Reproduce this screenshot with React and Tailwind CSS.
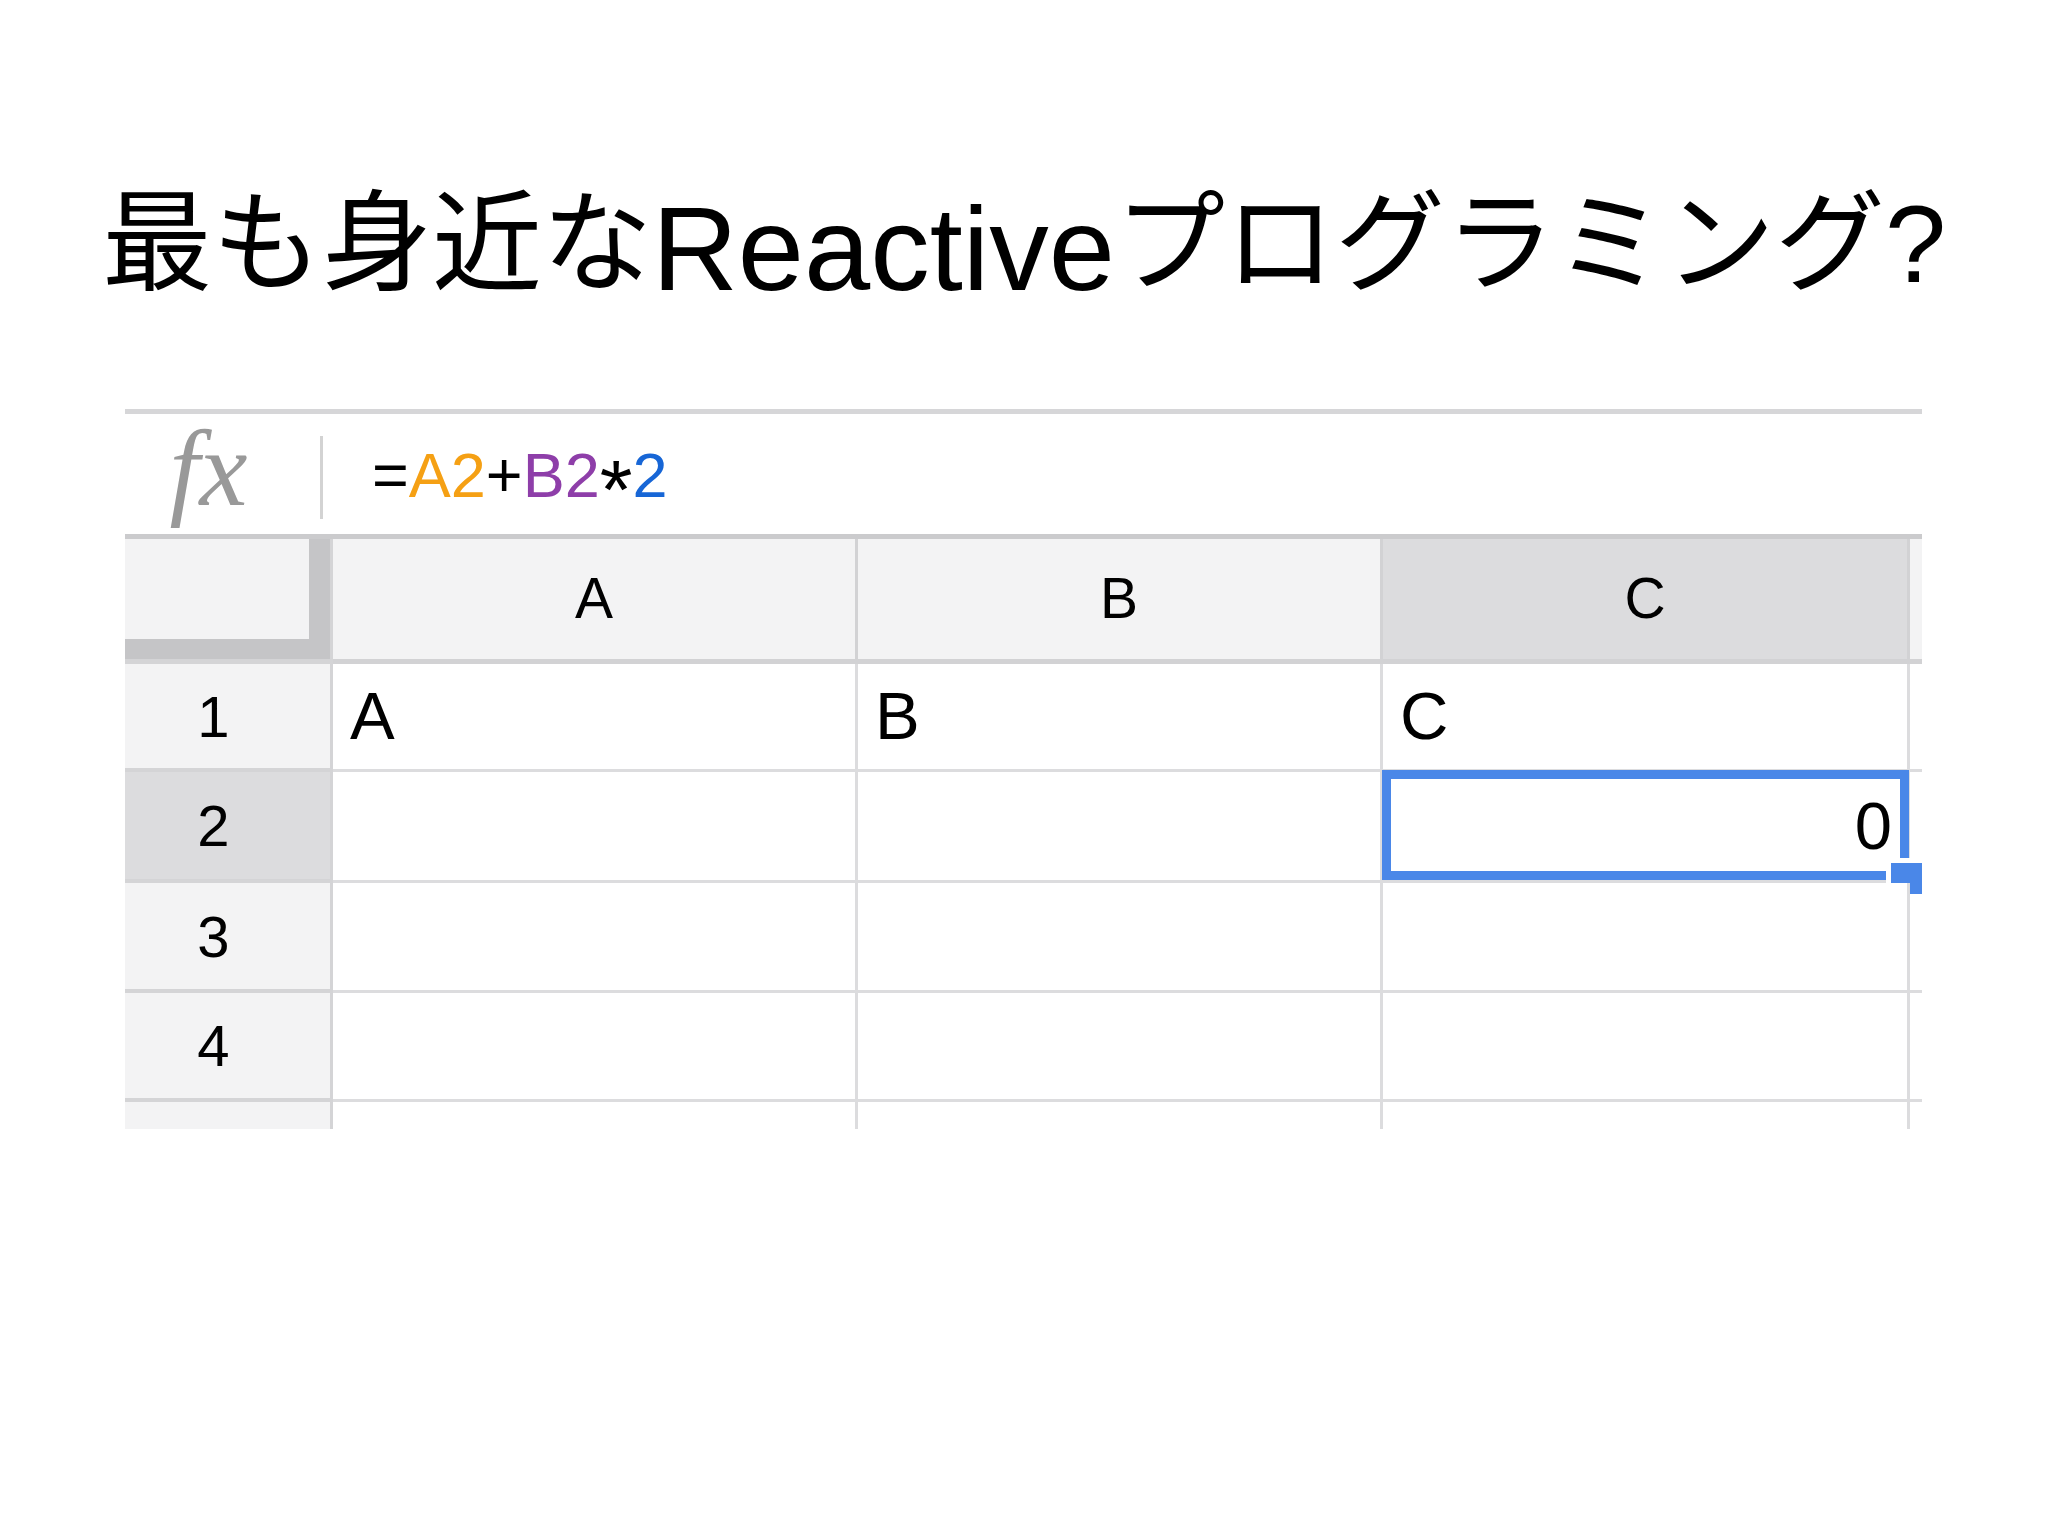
import React from 'react';

const font = "font-['Liberation_Sans','Noto_Sans_CJK_JP',sans-serif]";

const rows = [
  { n: '1', h: 'h-[108px]', cells: ['A', 'B', 'C'] },
  { n: '2', h: 'h-[111px]', cells: ['', '', '0'], active: true },
  { n: '3', h: 'h-[110px]', cells: ['', '', ''] },
  { n: '4', h: 'h-[109px]', cells: ['', '', ''] },
];

const colWidths = ['w-[525px]', 'w-[525px]', 'w-[527px]'];

function Formula() {
  return (
    <div className="text-[63px] leading-[63px]">
      <span className="text-black">=</span>
      <span className="text-[#f5a014]">A2</span>
      <span className="text-black">+</span>
      <span className="text-[#8e3ea9]">B2</span>
      <span className="relative top-[22px] text-[84px] leading-[40px] text-black">*</span>
      <span className="text-[#1766d6]">2</span>
    </div>
  );
}

export default function App() {
  return (
    <div className={`w-[2048px] h-[1536px] bg-white overflow-hidden ${font}`}>
      {/* title */}
      <div className="h-[409px] pt-[189px] flex justify-center text-[110px] leading-none text-black">
        <span>最も身近な</span>
        <span className="text-[119px]">Reactive</span>
        <span>プログラミング?</span>
      </div>

      {/* sheet */}
      <div className="ml-[125px] w-[1797px]">
        <div className="h-[5px] bg-[#d6d6d8]" />

        {/* formula bar */}
        <div className="h-[120px] flex items-center bg-white">
          <div className="w-[195px] flex justify-center pr-[28px]">
            <span className="font-['Liberation_Serif',serif] italic text-[108px] leading-none text-[#999999] -mt-[10px]">fx</span>
          </div>
          <div className="w-[3px] h-[83px] bg-[#d3d3d3] mt-[6px]" />
          <div className="pl-[49px] mt-[2px]">
            <Formula />
          </div>
        </div>
        <div className="h-[5px] bg-[#cbcbcd]" />

        {/* column header */}
        <div className="flex h-[125px]">
          <div className="w-[208px] h-full flex flex-col border-r-[3px] border-b-[5px] border-[#d4d4d6]">
            <div className="flex-1 bg-[#f3f3f4] border-r-[21px] border-b-[20px] border-[#c5c5c7]" />
          </div>
          {['A', 'B', 'C'].map((c, i) => (
            <div
              key={c}
              className={`${colWidths[i]} h-full flex items-center justify-center border-r-[3px] border-b-[5px] border-[#d2d2d4] text-[57px] text-black ${c === 'C' ? 'bg-[#dcdcde]' : 'bg-[#f3f3f4]'}`}
            >
              {c}
            </div>
          ))}
          <div className="w-[12px] h-full bg-[#f3f3f4] border-b-[5px] border-[#d2d2d4]" />
        </div>

        {/* body rows */}
        {rows.map((r) => (
          <div key={r.n} className={`flex ${r.h}`}>
            <div
              className={`w-[208px] h-full flex items-center justify-center pr-[28px] border-r-[3px] border-b-[4px] border-[#d4d4d6] text-[58px] text-black ${r.active ? 'bg-[#dcdcde]' : 'bg-[#f3f3f4]'}`}
            >
              {r.n}
            </div>
            {r.cells.map((v, i) => {
              const selected = r.active && i === 2;
              return (
                <div
                  key={i}
                  className={`${colWidths[i]} h-full relative flex items-center border-r-[3px] border-b-[3px] border-[#dcdcde] bg-white text-[67px] text-black ${selected ? 'justify-end pr-[15px]' : 'pl-[17px]'}`}
                >
                  {v}
                  {selected && (
                    <>
                      <div className="absolute -left-px -top-[2px] -right-[2px] bottom-0 border-[9px] border-[#4a87e8]" />
                      <div className="absolute left-[503px] top-[86px] w-[41px] h-[41px] border-[5px] border-white bg-[#4a87e8]" />
                    </>
                  )}
                </div>
              );
            })}
            <div className="w-[12px] h-full bg-white border-b-[3px] border-[#dcdcde]" />
          </div>
        ))}

        {/* partial row */}
        <div className="flex h-[27px]">
          <div className="w-[208px] h-full bg-[#f3f3f4] border-r-[3px] border-[#d4d4d6]" />
          {colWidths.map((w, i) => (
            <div key={i} className={`${w} h-full bg-white border-r-[3px] border-[#dcdcde]`} />
          ))}
        </div>
      </div>
    </div>
  );
}
